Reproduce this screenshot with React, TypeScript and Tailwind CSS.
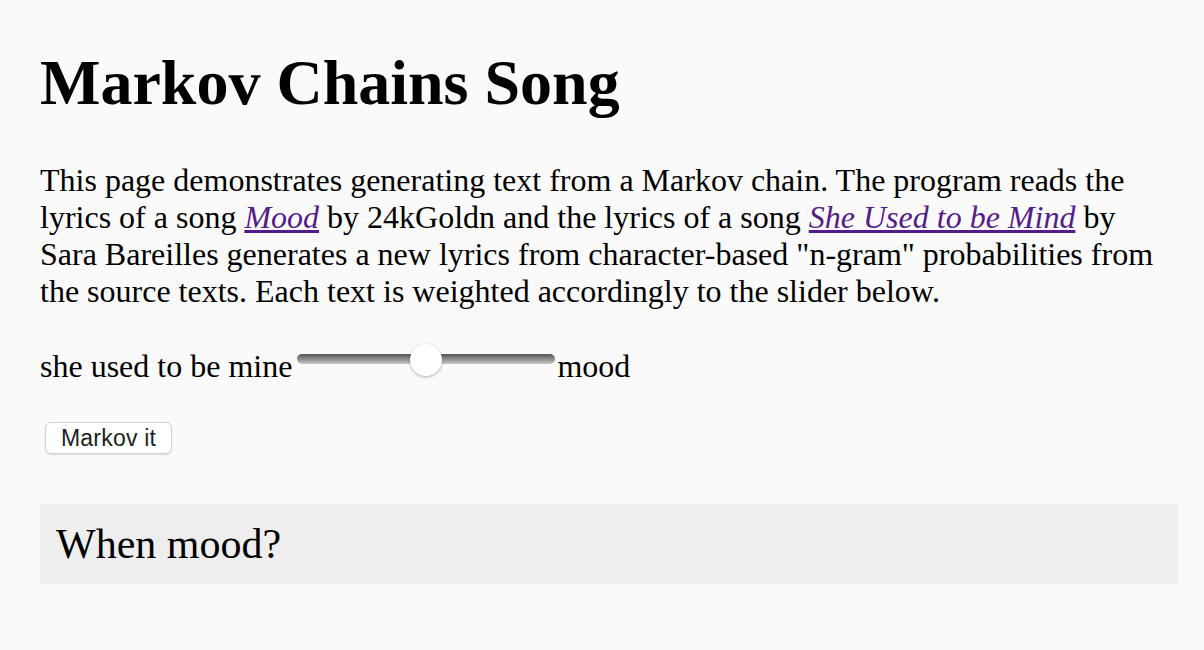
export default function App() {
  return (
    <main
      className="min-h-screen bg-[#fafafa] text-black px-[40px] pt-[46px] pb-10"
      style={{ fontFamily: '"Liberation Serif", "Times New Roman", serif' }}
    >
      <div className="w-[1138px]">
        <h1 className="text-[64px] font-bold leading-[normal]">Markov Chains Song</h1>

        <p className="mt-[42px] text-[32px] leading-[normal]">
          This page demonstrates generating text from a Markov chain. The program reads the lyrics of a song{" "}
          <a href="#" className="italic underline text-[#551a8b]">Mood</a> by 24kGoldn and the lyrics of a song{" "}
          <a href="#" className="italic underline text-[#551a8b]">She Used to be Mind</a> by Sara Bareilles generates
          a new lyrics from character-based "n-gram" probabilities from the source texts. Each text is weighted
          accordingly to the slider below.
        </p>

        <div className="mt-[38px] flex items-start text-[32px] leading-[normal]">
          <span>she used to be mine</span>
          <div className="relative -mt-[4px] ml-[3px] h-[32px] w-[262px]">
            <div className="mt-[10px] ml-[2px] h-[10px] w-[258px] rounded-full bg-gradient-to-b from-[#555] to-[#c9c9c9]" />
            <div className="absolute left-[115px] top-0 h-[32px] w-[32px] rounded-full bg-white shadow-[0_1px_3px_rgba(0,0,0,0.3)]" />
          </div>
          <span>mood</span>
        </div>

        <button
          className="mt-[37px] ml-[5px] flex h-[32px] items-center rounded-[6px] border border-[#d2d2d2] bg-white px-[15px] text-[23px] leading-none tracking-[0.2px] text-[#222] shadow-[0_1px_2px_rgba(0,0,0,0.12)]"
          style={{ fontFamily: '"Liberation Sans", Arial, sans-serif' }}
        >
          Markov it
        </button>

        <div className="mt-[50px] bg-[#eeeeee] p-[16px] text-[42px] leading-[normal]">When mood?</div>
      </div>
    </main>
  );
}
